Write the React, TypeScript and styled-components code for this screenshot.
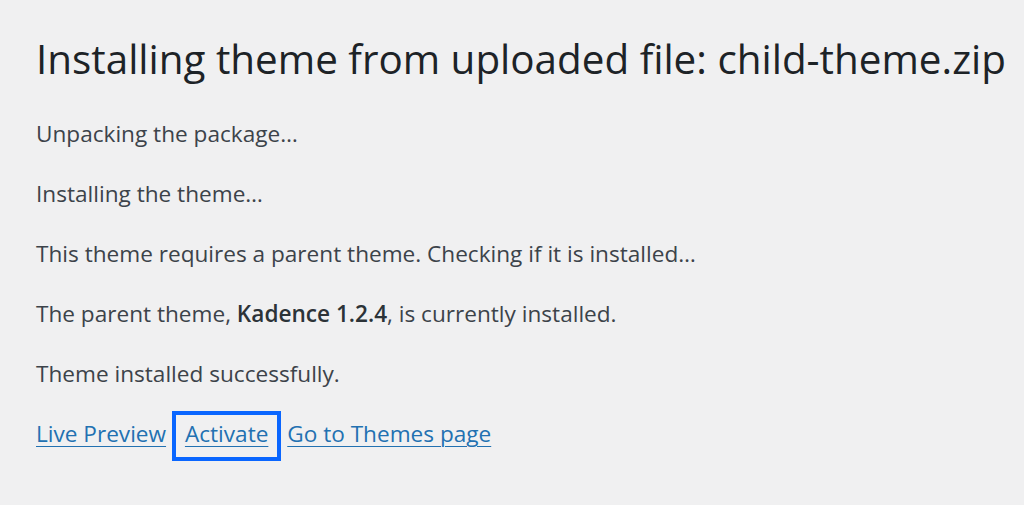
import React from 'react'
import styled, { createGlobalStyle } from 'styled-components'

const Global = createGlobalStyle`
  html, body {
    margin: 0;
    padding: 0;
    background: #f0f0f1;
  }
  body {
    font-family: "Open Sans", "Noto Sans", sans-serif;
  }
`

const Wrap = styled.div`
  padding: 31px 0 0 36px;
  width: 1024px;
  height: 505px;
  box-sizing: border-box;
  overflow: hidden;
`

const Title = styled.h1`
  margin: 0 0 17px;
  font-size: 40.4px;
  font-weight: 400;
  line-height: 56px;
  color: #1d2327;
  white-space: nowrap;
`

const Line = styled.p`
  margin: 0;
  font-size: 22.6px;
  line-height: 60px;
  color: #3c434a;
  white-space: nowrap;
`

const Strong = styled.strong`
  font-weight: 600;
  color: #2c3338;
`

const Link = styled.a`
  color: #2271b1;
  text-decoration: underline;
  text-underline-offset: 4px;
  text-decoration-thickness: 1px;
`

const Marked = styled.span`
  display: inline-block;
  border: 4px solid #0a66ff;
  padding: 0 9px 4px;
  line-height: 38px;
`

export default function App() {
  return (
    <>
      <Global />
      <Wrap>
        <Title>Installing theme from uploaded file: child-theme.zip</Title>
        <Line>Unpacking the package…</Line>
        <Line>Installing the theme…</Line>
        <Line>This theme requires a parent theme. Checking if it is installed…</Line>
        <Line>
          The parent theme, <Strong>Kadence 1.2.4</Strong>, is currently installed.
        </Line>
        <Line>Theme installed successfully.</Line>
        <Line>
          <Link href="#">Live Preview</Link>{' '}
          <Marked>
            <Link href="#">Activate</Link>
          </Marked>{' '}
          <Link href="#">Go to Themes page</Link>
        </Line>
      </Wrap>
    </>
  )
}
